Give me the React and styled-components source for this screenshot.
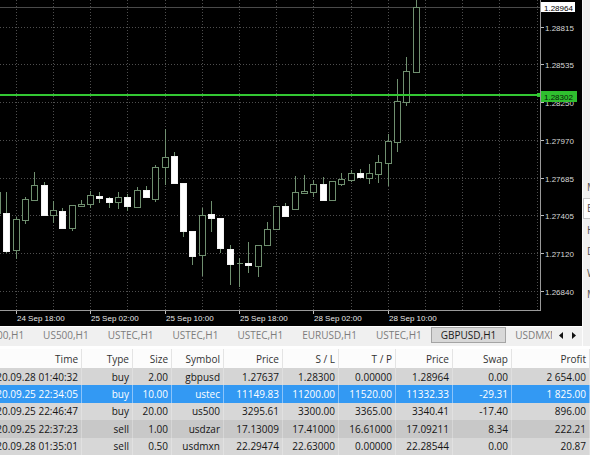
import React from "react";
import styled, { createGlobalStyle } from "styled-components";

const GlobalStyle = createGlobalStyle`
  html, body {
    margin: 0;
    padding: 0;
    background: #f0f0f0;
  }
  body {
    font-family: "Open Sans", "Liberation Sans", sans-serif;
  }
`;

const Window = styled.div`
  width: 590px;
  height: 455px;
  overflow: hidden;
  display: flex;
  flex-direction: column;
  background: #f0f0f0;
`;

const Top = styled.div`
  display: flex;
  height: 346px;
`;

const ChartColumn = styled.div`
  width: 582px;
  display: flex;
  flex-direction: column;
`;

const ChartCanvas = styled.svg`
  display: block;
  width: 582px;
  height: 326px;
  background: #000;
  font-family: "Liberation Sans", Arial, sans-serif;
  font-size: 8px;
`;

// tab strip under the chart
const TabBar = styled.div`
  height: 20px;
  display: flex;
  background: #f0f0f0;
  border-top: 1px solid #fff;
  box-sizing: border-box;
`;

const TabViewport = styled.div`
  flex: 1;
  overflow: hidden;
`;

const TabStrip = styled.div`
  display: flex;
  height: 100%;
  margin-left: -31px;
`;

const Tab = styled.div`
  display: flex;
  align-items: center;
  padding: 0 8.5px;
  height: 16px;
  white-space: nowrap;
  font-size: 10px;
  color: ${(p) => (p.$active ? "#1a1a1a" : "#7c7c7c")};
  background: ${(p) => (p.$active ? "#d8d8d8" : "transparent")};
  border: 1px solid ${(p) => (p.$active ? "#a4a4a4" : "transparent")};
  box-sizing: border-box;
`;

const TabSep = styled.div`
  width: 1px;
  height: 13px;
  margin-top: 2px;
  background: ${(p) => (p.$hidden ? "transparent" : "#c6c6c6")};
`;

const TabArrows = styled.div`
  width: 30px;
  display: flex;
  align-items: center;
  justify-content: center;
  gap: 9px;
  padding-bottom: 3px;
  background: #f0f0f0;
`;

const SidePanel = styled.div`
  width: 8px;
  height: 346px;
  background: #f0f0f0;
  border-left: 1px solid #fdfdfd;
  box-sizing: border-box;
  overflow: hidden;
  display: flex;
  flex-direction: column;
  padding-top: 176px;
`;

const SideItem = styled.div`
  height: 21.5px;
  display: flex;
  align-items: center;
  padding-left: 3px;
  font-size: 10px;
  color: #555;
  white-space: nowrap;
  box-sizing: border-box;
  border: 1px solid ${(p) => (p.$boxed ? "#c8c8c8" : "transparent")};
  border-right: none;
  background: ${(p) => (p.$boxed ? "#fff" : "transparent")};
`;

// trade table
const Table = styled.div`
  flex: 1;
  background: #fff;
  padding-top: 3px;
`;

const Row = styled.div`
  display: grid;
  grid-template-columns: 82px 51px 39px 52px 59px 56px 57px 57px 59px 78px;
  height: ${(p) => (p.$header ? "19px" : "17.4px")};
  background: ${(p) => p.$bg};
  color: ${(p) => p.$color};
  font-size: 10px;
`;

const Cell = styled.div`
  display: flex;
  align-items: center;
  justify-content: flex-end;
  padding-right: 3px;
  overflow: hidden;
  white-space: nowrap;
  border-right: 1px solid ${(p) => p.$line};
`;

const candles = [
  [-2, 213, 192, 190, 215],
  [-1, 212.7, 250.7, 192.3, 253.3],
  [0, 250.7, 219.3, 217, 259.3],
  [1, 220, 199.3, 196.7, 224.3],
  [2, 200, 185, 171.7, 200],
  [3, 185, 215, 181.7, 215],
  [4, 215, 210, 200.7, 223.3],
  [5, 210.7, 227.3, 208.3, 227.3],
  [6, 227.7, 205, 205, 230.7],
  [7, 206.7, 204.3, 200, 206.7],
  [8, 204.3, 195, 190.7, 208.3],
  [9, 196, 198, 192.3, 202.7],
  [10, 198.3, 202.3, 196.7, 207.7],
  [11, 202.3, 197.3, 192.3, 209],
  [12, 196.7, 206, 194.3, 210.7],
  [13, 206.7, 190, 187.3, 207.7],
  [14, 190, 196.7, 186, 197.3],
  [15, 199, 166.7, 165, 201.7],
  [16, 166.7, 156.7, 129, 185],
  [17, 156, 182.7, 151.7, 183.3],
  [18, 182.7, 230.7, 182.7, 236.7],
  [19, 230.7, 255.3, 230.7, 265],
  [20, 255.3, 215, 208.3, 276],
  [21, 214.3, 218.3, 200.7, 231.7],
  [22, 218.3, 248.7, 218.3, 253.3],
  [23, 248.7, 263.3, 245, 285],
  [24, 262.7, 262.7, 258.3, 286.7],
  [25, 262.7, 265, 242.3, 273.3],
  [26, 265.7, 245, 245, 276.7],
  [27, 245.7, 229.3, 222.3, 245.7],
  [28, 229, 206, 206, 229],
  [29, 206, 215.7, 202.7, 215.7],
  [30, 209, 192.3, 176, 209],
  [31, 193.3, 191, 175, 194],
  [32, 191.7, 184, 180, 197.3],
  [33, 184, 200, 177.3, 200],
  [34, 200, 181, 181, 200],
  [35, 184, 179.3, 173.3, 186],
  [36, 180, 172.7, 170, 181.7],
  [37, 172.7, 176.7, 169.3, 176.7],
  [38, 177.3, 172.7, 164, 184],
  [39, 173.3, 161.7, 155, 183.3],
  [40, 162.7, 140.7, 134.3, 185.7],
  [41, 141.7, 101, 79, 151.7],
  [42, 101.7, 71, 56.7, 106],
  [43, 71.7, 7, -2, 73.3],
];

const priceLevels = ["1.28815", "1.28535", "1.28250", "1.27970", "1.27685", "1.27405", "1.27120", "1.26840"];
const timeLabels = ["24 Sep 18:00", "25 Sep 02:00", "25 Sep 10:00", "25 Sep 18:00", "28 Sep 02:00", "28 Sep 10:00"];

const px = (v) => Math.round(v) + 0.5;
const gridX = Array.from({ length: 15 }, (_, i) => px(15.7 + 37.2 * i));
const gridY = priceLevels.map((_, j) => px(26.7 + 37.7 * j));

const WICK = "#6f8f6f";

const Candle = ({ k, o, c, h, l }) => {
  const cx = px(15.7 + 9.3 * k);
  const top = Math.round(Math.min(o, c)) + 0.5;
  const height = Math.max(Math.round(Math.abs(o - c)), 0);
  const bear = c > o;
  return (
    <g>
      <line x1={cx} y1={Math.round(h)} x2={cx} y2={Math.round(l)} stroke={WICK} />
      {height === 0 ? (
        <line x1={cx - 3} y1={top} x2={cx + 3} y2={top} stroke={WICK} />
      ) : (
        <rect
          x={cx - 3}
          y={top}
          width={6}
          height={height}
          fill={bear ? "#fff" : "#000"}
          stroke={bear ? "#f2f2f2" : WICK}
        />
      )}
    </g>
  );
};

const Chart = () => (
  <ChartCanvas viewBox="0 0 582 326" shapeRendering="crispEdges">
    {gridX.map((x) => (
      <line key={"gx" + x} x1={x} y1={0} x2={x} y2={310} stroke="#4e4e4e" strokeDasharray="1 2" />
    ))}
    {gridY.map((y) => (
      <line key={"gy" + y} x1={0} y1={y} x2={540} y2={y} stroke="#4e4e4e" strokeDasharray="1 2" />
    ))}
    <line x1={0} y1={7.5} x2={540} y2={7.5} stroke="#4a4a4a" />
    {candles.map(([k, o, c, h, l]) => (
      <Candle key={k} k={k} o={o} c={c} h={h} l={l} />
    ))}
    <line x1={0} y1={95} x2={540} y2={95} stroke="#33c733" strokeWidth={2} />
    <rect x={537} y={93} width={4} height={4} fill="#33c733" />

    <line x1={540.5} y1={0} x2={540.5} y2={311} stroke="#9a9a9a" />
    <line x1={0} y1={310.5} x2={541} y2={310.5} stroke="#9a9a9a" />

    {priceLevels.map((p, j) => (
      <g key={p}>
        <line x1={541} y1={gridY[j]} x2={544} y2={gridY[j]} stroke="#bbb" />
        <text x={545} y={gridY[j] + 3} fill="#d8d8d8" shapeRendering="auto">
          {p}
        </text>
      </g>
    ))}

    <rect x={541} y={2} width={34} height={10} fill="#fff" />
    <text x={544} y={10.5} fill="#000">1.28964</text>

    <rect x={541} y={91} width={36} height={11} fill="#2fbf2f" />
    <text x={544} y={99.5} fill="#062006">1.28302</text>

    {timeLabels.map((t, i) => (
      <g key={t}>
        <line x1={gridX[i * 2]} y1={311} x2={gridX[i * 2]} y2={314} stroke="#bbb" />
        <text x={gridX[i * 2] + 0.5} y={321} fill="#e8e8e8">
          {t}
        </text>
      </g>
    ))}
  </ChartCanvas>
);

const tabs = ["US500,H1", "US500,H1", "USTEC,H1", "USTEC,H1", "USTEC,H1", "EURUSD,H1", "USTEC,H1", "GBPUSD,H1", "USDMXN,H1"];
const activeTab = 7;

const Arrow = ({ dir }) => (
  <svg width="4" height="7" viewBox="0 0 4 7">
    <path d={dir === "left" ? "M4 0 L0 3.5 L4 7 Z" : "M0 0 L4 3.5 L0 7 Z"} fill="#111" />
  </svg>
);

const header = ["Time", "Type", "Size", "Symbol", "Price", "S / L", "T / P", "Price", "Swap", "Profit"];
const trades = [
  ["2020.09.28 01:40:32", "buy", "2.00", "gbpusd", "1.27637", "1.28300", "0.00000", "1.28964", "0.00", "2 654.00"],
  ["2020.09.25 22:34:05", "buy", "10.00", "ustec", "11149.83", "11200.00", "11520.00", "11332.33", "-29.31", "1 825.00"],
  ["2020.09.25 22:46:47", "buy", "20.00", "us500", "3295.61", "3300.00", "3365.00", "3340.41", "-17.40", "896.00"],
  ["2020.09.25 22:37:23", "sell", "1.00", "usdzar", "17.13009", "17.41000", "16.61000", "17.09211", "8.34", "222.21"],
  ["2020.09.28 01:35:01", "sell", "0.50", "usdmxn", "22.29474", "22.63000", "0.00000", "22.28544", "0.00", "20.87"],
];
const rowBg = ["#d5d5d5", "#3399f3", "#d7d7d7", "#c8c8c8", "#d7d7d7"];

const App = () => (
  <>
    <GlobalStyle />
    <Window>
      <Top>
        <ChartColumn>
          <Chart />
          <TabBar>
            <TabViewport>
              <TabStrip>
                {tabs.map((t, i) => (
                  <React.Fragment key={i}>
                    <Tab $active={i === activeTab}>{t}</Tab>
                    {i < tabs.length - 1 && (
                      <TabSep $hidden={i === activeTab || i + 1 === activeTab} />
                    )}
                  </React.Fragment>
                ))}
              </TabStrip>
            </TabViewport>
            <TabArrows>
              <Arrow dir="left" />
              <Arrow dir="right" />
            </TabArrows>
          </TabBar>
        </ChartColumn>
        <SidePanel>
          <SideItem>Market</SideItem>
          <SideItem $boxed>Balance</SideItem>
          <SideItem>High</SideItem>
          <SideItem>Daily</SideItem>
          <SideItem>Weekly</SideItem>
          <SideItem>Monthly</SideItem>
        </SidePanel>
      </Top>
      <Table>
        <Row $header $bg="#fcfcfc" $color="#333">
          {header.map((h, i) => (
            <Cell key={i} $line="#e4e4e4">
              {h}
            </Cell>
          ))}
        </Row>
        {trades.map((r, i) => (
          <Row key={i} $bg={rowBg[i]} $color={i === 1 ? "#fff" : "#151515"}>
            {r.map((v, j) => (
              <Cell key={j} $line={i === 1 ? "#8cc4fa" : "rgba(255,255,255,0.25)"}>
                {v}
              </Cell>
            ))}
          </Row>
        ))}
      </Table>
    </Window>
  </>
);

export default App;
